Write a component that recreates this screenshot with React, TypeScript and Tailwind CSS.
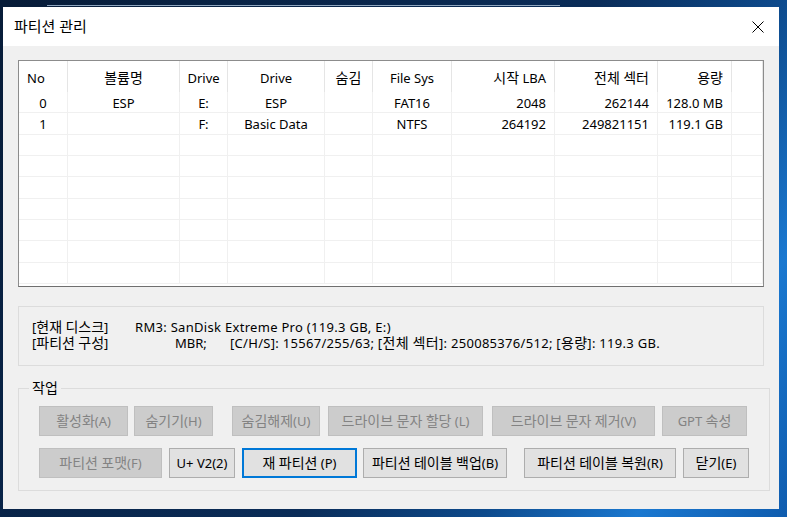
import React from 'react';

const font = "font-['Noto_Sans','Noto_Sans_CJK_KR',sans-serif]";

const K = (s: string) => (
    <span>
        {s.split(/([\uAC00-\uD7A3]+)/).map((p, i) =>
            /[\uAC00-\uD7A3]/.test(p) ? (
                <span key={i} className="text-[14px]">
                    {p}
                </span>
            ) : (
                p
            )
        )}
    </span>
);

type Align = 'left' | 'center' | 'right';

const columns: { label: string; align: Align; head: Align }[] = [
    { label: 'No', align: 'center', head: 'left' },
    { label: '볼륨명', align: 'center', head: 'center' },
    { label: 'Drive', align: 'center', head: 'center' },
    { label: 'Drive', align: 'center', head: 'center' },
    { label: '숨김', align: 'center', head: 'center' },
    { label: 'File Sys', align: 'center', head: 'center' },
    { label: '시작 LBA', align: 'right', head: 'right' },
    { label: '전체 섹터', align: 'right', head: 'right' },
    { label: '용량', align: 'right', head: 'right' },
    { label: '', align: 'center', head: 'center' },
];

const empty = ['', '', '', '', '', '', '', '', '', ''];

const rows: string[][] = [
    ['0', 'ESP', 'E:', 'ESP', '', 'FAT16', '2048', '262144', '128.0 MB', ''],
    ['1', '', 'F:', 'Basic Data', '', 'NTFS', '264192', '249821151', '119.1 GB', ''],
    empty,
    empty,
    empty,
    empty,
    empty,
    empty,
    empty,
];

const alignClass: Record<Align, string> = {
    left: 'justify-start pl-[8px]',
    center: 'justify-center',
    right: 'justify-end pr-[8px]',
};

const gridCols = 'grid grid-cols-[49px_112px_48px_97px_48px_79px_103px_103px_74px_31px]';

interface Btn {
    label: string;
    w: string;
    ml: string;
    state: 'disabled' | 'normal' | 'focused';
}

const row1: Btn[] = [
    { label: '활성화(A)', w: 'w-[89px]', ml: 'ml-0', state: 'disabled' },
    { label: '숨기기(H)', w: 'w-[79px]', ml: 'ml-[6px]', state: 'disabled' },
    { label: '숨김해제(U)', w: 'w-[88px]', ml: 'ml-[19px]', state: 'disabled' },
    { label: '드라이브 문자 할당 (L)', w: 'w-[155px]', ml: 'ml-[8px]', state: 'disabled' },
    { label: '드라이브 문자 제거(V)', w: 'w-[163px]', ml: 'ml-[9px]', state: 'disabled' },
    { label: 'GPT 속성', w: 'w-[85px]', ml: 'ml-[7px]', state: 'disabled' },
];

const row2: Btn[] = [
    { label: '파티션 포맷(F)', w: 'w-[123px]', ml: 'ml-0', state: 'disabled' },
    { label: 'U+ V2(2)', w: 'w-[66px]', ml: 'ml-[7px]', state: 'normal' },
    { label: '재 파티션 (P)', w: 'w-[115px]', ml: 'ml-[7px]', state: 'focused' },
    { label: '파티션 테이블 백업(B)', w: 'w-[144px]', ml: 'ml-[6px]', state: 'normal' },
    { label: '파티션 테이블 복원(R)', w: 'w-[152px]', ml: 'ml-[17px]', state: 'normal' },
    { label: '닫기(E)', w: 'w-[66px]', ml: 'ml-[7px]', state: 'normal' },
];

const btnState = {
    disabled: 'bg-[#cccccc] border border-[#bfbfbf] text-[#838383]',
    normal: 'bg-[#e1e1e1] border border-[#adadad] text-black',
    focused: 'bg-[#e1e1e1] border-2 border-[#0078d7] text-black',
};

const ButtonRow: React.FC<{ items: Btn[] }> = ({ items }) => (
    <div className="flex">
        {items.map((b, i) => (
            <button
                key={i}
                className={`${b.w} ${b.ml} h-[30px] flex items-center justify-center whitespace-pre leading-[16px] ${btnState[b.state]}`}
            >
                {K(b.label)}
            </button>
        ))}
    </div>
);

const App: React.FC = () => {
    return (
        <div
            className={`w-[787px] h-[517px] overflow-hidden bg-[linear-gradient(120deg,#071c38_0%,#0a2c58_55%,#0d4a8c_72%,#1a78d0_86%,#0f5cae_100%)] ${font}`}
        >
            {/* window edge behind the dialog */}
            <div className="h-[7px] pt-[5px] pl-[47px]">
                <div className="w-[513px] h-px bg-[#8fa6bf]" />
            </div>

            <div className="ml-[3px] w-[776px] h-[502px] bg-[#f0f0f0] flex flex-col">
                {/* Title bar */}
                <div className="h-[39px] bg-white flex items-center justify-between pl-[11px] pr-[15px]">
                    <span className="text-[15px] text-black">파티션 관리</span>
                    <svg width="12" height="12" viewBox="0 0 12 12" className="text-black">
                        <path d="M0.5 0.5L11.5 11.5M11.5 0.5L0.5 11.5" stroke="currentColor" strokeWidth="1" />
                    </svg>
                </div>

                <div className="px-[15px] pt-[14px] text-[13px] text-black">
                    {/* Partition list */}
                    <div className="h-[227px] bg-white border border-[#8c8c8c] border-b-[#6f6f6f] overflow-hidden leading-[16px]">
                        <div className={`${gridCols} h-[31px]`}>
                            {columns.map((c, i) => (
                                <div
                                    key={i}
                                    className={`flex items-center pt-[2px] border-r border-[#e5e5e5] whitespace-pre ${alignClass[c.head]}`}
                                >
                                    {K(c.label)}
                                </div>
                            ))}
                        </div>
                        {rows.map((r, ri) => (
                            <div key={ri} className={`${gridCols} h-[21.33px]`}>
                                {r.map((cell, ci) => (
                                    <div
                                        key={ci}
                                        className={`flex items-center pt-[2px] border-r border-b border-[#f0f0f0] whitespace-nowrap ${alignClass[columns[ci].align]}`}
                                    >
                                        {cell}
                                    </div>
                                ))}
                            </div>
                        ))}
                    </div>

                    {/* Disk info */}
                    <div className="mt-[19px] h-[60px] border border-[#dcdcdc] pl-[13px] pt-[12px] leading-[16px] whitespace-nowrap">
                        <div className="flex">
                            <span className="w-[103px]">{K('[현재 디스크]')}</span>
                            <span className="tracking-[0.3px]">RM3: SanDisk Extreme Pro (119.3 GB, E:)</span>
                        </div>
                        <div className="flex">
                            <span className="w-[143px]">{K('[파티션 구성]')}</span>
                            <span className="w-[55px]">MBR;</span>
                            <span className="tracking-[0.3px]">
                                {K('[C/H/S]: 15567/255/63; [전체 섹터]: 250085376/512; [용량]: 119.3 GB.')}
                            </span>
                        </div>
                    </div>

                    {/* Actions */}
                    <fieldset className="mt-[14px] mr-px border border-[#dcdcdc]">
                        <legend className="ml-[10px] px-[3px] leading-[16px]">{K('작업')}</legend>
                        <div className="px-[20px] pt-[10px] pb-[12px] flex flex-col gap-[12px]">
                            <ButtonRow items={row1} />
                            <ButtonRow items={row2} />
                        </div>
                    </fieldset>
                </div>
            </div>
        </div>
    );
};

export default App;
